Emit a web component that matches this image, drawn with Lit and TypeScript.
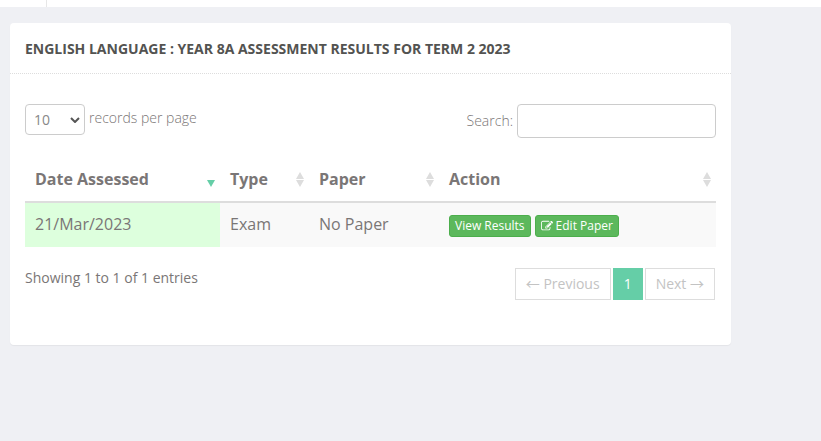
import { LitElement, html, css, svg } from "lit";
import { customElement, property } from "lit/decorators.js";

type Sort = "none" | "active";

interface Column {
  label: string;
  cls: string;
  sort: Sort;
}

const COLUMNS: Column[] = [
  { label: "Date Assessed", cls: "date", sort: "active" },
  { label: "Type", cls: "type", sort: "none" },
  { label: "Paper", cls: "paper", sort: "none" },
  { label: "Action", cls: "action", sort: "none" },
];

const editIcon = html`<svg class="icon" viewBox="0 0 1792 1792" aria-hidden="true">
  ${svg`<path d="M888 1184l116-116-152-152-116 116v56h96v96h56zm440-720q-16-16-33 1l-350 350q-17 17-1 33t33-1l350-350q17-17 1-33zm80 594v190q0 119-84.500 203.500t-203.500 84.500h-832q-119 0-203.500-84.500t-84.500-203.500v-832q0-119 84.500-203.500t203.500-84.500h832q63 0 117 25 15 7 18 23 3 17-9 29l-49 49q-14 14-32 8-23-6-45-6h-832q-66 0-113 47t-47 113v832q0 66 47 113t113 47h832q66 0 113-47t47-113v-126q0-13 9-22l64-64q15-15 35-7t20 29zm-96-738l288 288-672 672h-288v-288zm444 132l-92 92-288-288 92-92q28-28 68-28t68 28l152 152q28 28 28 68t-28 68z"/>`}
</svg>`;

@customElement("sort-mark")
class SortMark extends LitElement {
  @property() state: Sort = "none";

  static styles = css`
    :host {
      display: block;
      width: 8px;
      height: 15px;
    }
    svg {
      display: block;
      width: 8px;
      height: 15px;
      fill: #ddd;
    }
    .active {
      fill: #65cea7;
    }
  `;

  render() {
    return this.state === "active"
      ? html`<svg viewBox="0 0 8 15" aria-hidden="true"><path class="active" d="M0 8h8l-4 7z" /></svg>`
      : html`<svg viewBox="0 0 8 15" aria-hidden="true"><path d="M0 7h8l-4-7zM0 8h8l-4 7z" /></svg>`;
  }
}

@customElement("app-root")
export class AppRoot extends LitElement {
  static styles = css`
    :host {
      display: block;
      min-height: 100vh;
      background: #eff0f4;
      color: #7a7676;
      font: 14px/20px "Open Sans", sans-serif;
    }
    * {
      box-sizing: border-box;
    }
    .topbar {
      height: 7px;
      background: #fff;
    }
    .toggle {
      width: 47px;
      height: 7px;
      border-right: 1px solid #e7e7e7;
    }
    .panel {
      margin: 16px 90px 0 10px;
      background: #fff;
      border-radius: 4px;
      box-shadow: 0 1px 1px rgba(0, 0, 0, 0.05);
    }
    .title {
      margin: 0;
      padding: 16px 15px 14px;
      border-bottom: 1px dotted #ddd;
      color: #535351;
      font-size: 14px;
      line-height: 20px;
      font-weight: 700;
      text-transform: uppercase;
    }
    .body {
      padding: 30px 15px 45px;
    }
    .controls {
      display: flex;
      justify-content: space-between;
      align-items: flex-start;
      height: 53px;
      font-weight: 300;
    }
    .length,
    .search {
      display: flex;
      align-items: center;
      gap: 4px;
    }
    .length-text {
      padding-bottom: 4px;
    }
    .select-wrap {
      display: grid;
      align-items: center;
    }
    .select-wrap > * {
      grid-area: 1 / 1;
    }
    .chevron {
      justify-self: end;
      width: 10px;
      height: 6px;
      margin-right: 5px;
      fill: none;
      stroke: #555;
      stroke-width: 2;
      pointer-events: none;
    }
    select,
    input {
      border: 1px solid #ccc;
      border-radius: 4px;
      background: #fff;
      color: inherit;
      font: inherit;
    }
    select {
      appearance: none;
      width: 60px;
      height: 31px;
      padding: 0 8px;
      color: #888;
      font-weight: 400;
    }
    input {
      width: 199px;
      height: 34px;
      padding: 0 12px;
    }
    table {
      width: 100%;
      table-layout: fixed;
      border-collapse: collapse;
      font-size: 16px;
      line-height: 24px;
    }
    .date {
      width: 195px;
    }
    .type {
      width: 89px;
    }
    .paper {
      width: 130px;
    }
    th {
      padding: 10px 5px 10px 10px;
      border-bottom: 2px solid #ddd;
      text-align: left;
      font-weight: 700;
    }
    .head {
      display: flex;
      align-items: center;
      justify-content: space-between;
    }
    td {
      height: 45px;
      padding: 0 10px 2px;
      background: #f9f9f9;
    }
    .sorted {
      background: #dfd;
    }
    .actions {
      display: flex;
      gap: 4px;
      padding-top: 4px;
    }
    .btn {
      display: flex;
      align-items: center;
      gap: 3px;
      height: 22px;
      padding: 0 5px;
      border: 1px solid #4cae4c;
      border-radius: 3px;
      background: #5cb85c;
      color: #fff;
      font: 12px/18px "Open Sans", sans-serif;
      white-space: nowrap;
    }
    .icon {
      width: 12px;
      height: 12px;
      fill: #fff;
    }
    .footer {
      display: flex;
      justify-content: space-between;
      align-items: flex-start;
      padding: 21px 1px 0 0;
    }
    .pages {
      display: flex;
      gap: 2px;
    }
    .page {
      height: 32px;
      padding: 0 10px;
      border: 1px solid #ddd;
      background: #fff;
      color: #c3c3c3;
      font: inherit;
    }
    .arrow {
      font-family: "Noto Sans CJK JP", sans-serif;
      line-height: 1;
    }
    .current {
      border-color: #65cea7;
      background: #65cea7;
      color: #fff;
    }
  `;

  render() {
    return html`
      <header class="topbar"><div class="toggle"></div></header>
      <main class="panel">
        <h1 class="title">English Language : Year 8A Assessment Results for Term 2 2023</h1>
        <div class="body">
          <div class="controls">
            <label class="length">
              <span class="select-wrap">
                <select>
                  <option>10</option>
                  <option>25</option>
                  <option>50</option>
                </select>
                <svg class="chevron" viewBox="0 0 10 6" aria-hidden="true"><path d="M1 1l4 4 4-4" /></svg>
              </span>
              <span class="length-text">records per page</span>
            </label>
            <label class="search">Search: <input type="text" /></label>
          </div>
          <table>
            <thead>
              <tr>
                ${COLUMNS.map(
                  (c) => html`<th class=${c.cls} scope="col">
                    <div class="head">${c.label}<sort-mark .state=${c.sort}></sort-mark></div>
                  </th>`
                )}
              </tr>
            </thead>
            <tbody>
              <tr>
                <td class="sorted">21/Mar/2023</td>
                <td>Exam</td>
                <td>No Paper</td>
                <td>
                  <div class="actions">
                    <button class="btn">View Results</button>
                    <button class="btn">${editIcon}Edit Paper</button>
                  </div>
                </td>
              </tr>
            </tbody>
          </table>
          <div class="footer">
            <span>Showing 1 to 1 of 1 entries</span>
            <nav class="pages" aria-label="Pages">
              <button class="page"><span class="arrow">←</span> Previous</button>
              <button class="page current">1</button>
              <button class="page">Next <span class="arrow">→</span></button>
            </nav>
          </div>
        </div>
      </main>
    `;
  }
}
